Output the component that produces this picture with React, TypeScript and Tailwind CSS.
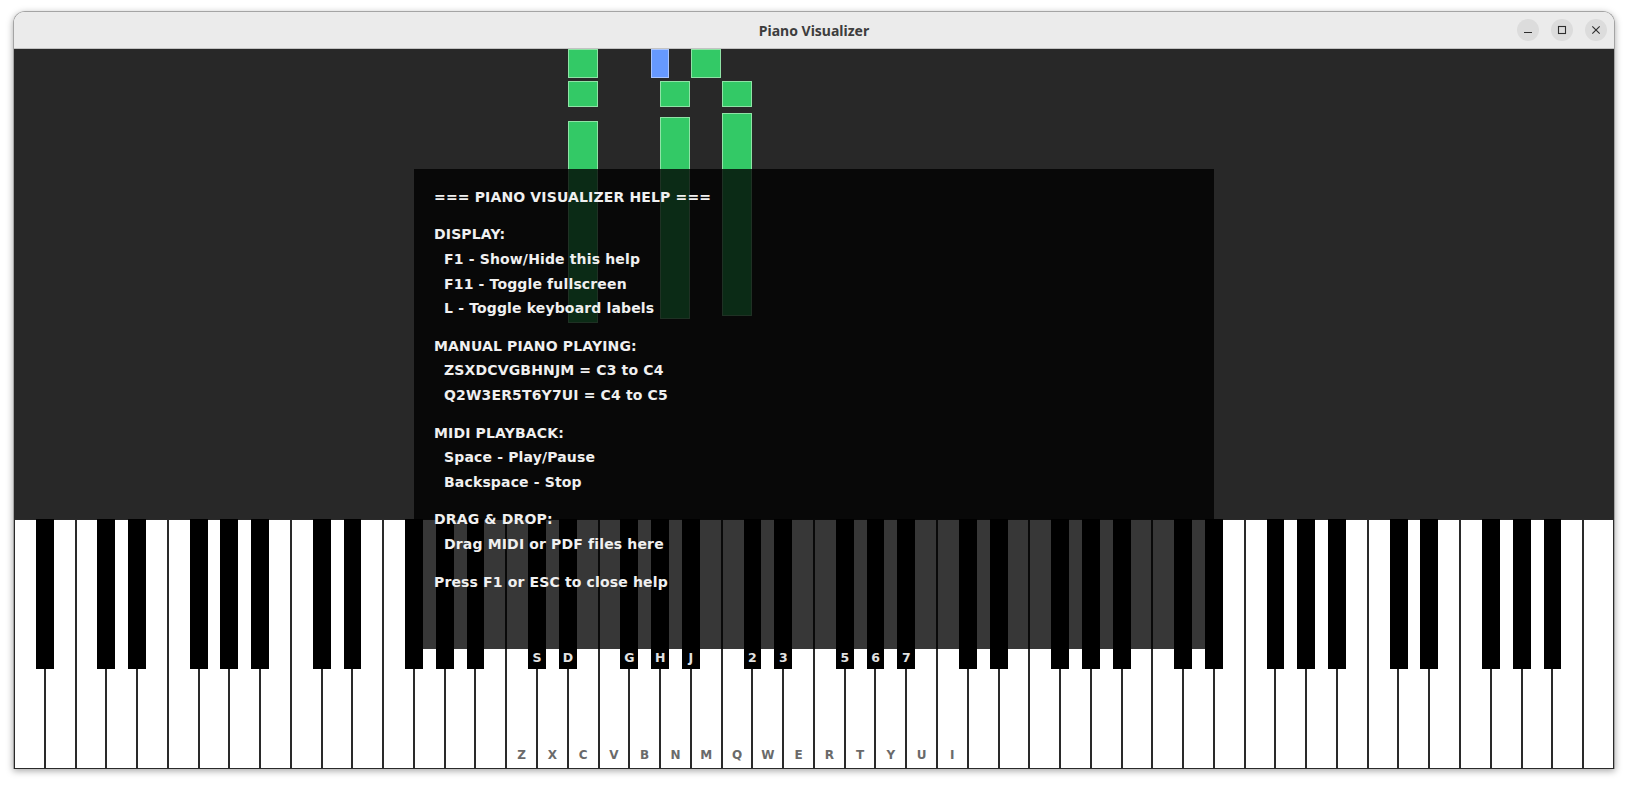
import React from "react";

const W = 1600 / 52;
const BW = 17.8;
const isBlack = (m: number) => [1, 3, 6, 8, 10].includes(m % 12);

const whiteLabels: Record<number, string> = {
  48: "Z", 50: "X", 52: "C", 53: "V", 55: "B", 57: "N", 59: "M",
  60: "Q", 62: "W", 64: "E", 65: "R", 67: "T", 69: "Y", 71: "U", 72: "I",
};
const blackLabels: Record<number, string> = {
  49: "S", 51: "D", 54: "G", 56: "H", 58: "J", 61: "2", 63: "3", 66: "5", 68: "6", 70: "7",
};

type Key = { midi: number; label?: string; left?: number };
const whites: Key[] = [];
const blacks: Key[] = [];
{
  let count = 0;
  for (let m = 21; m <= 108; m++) {
    if (isBlack(m)) {
      blacks.push({ midi: m, label: blackLabels[m], left: count * W - BW / 2 });
    } else {
      whites.push({ midi: m, label: whiteLabels[m] });
      count++;
    }
  }
}

type Note = { left: number; width: number; top: number; height: number; blue?: boolean };
const notes: Note[] = [
  { left: 18 * W, width: W - 0.8, top: 0, height: 29 },
  { left: 18 * W, width: W - 0.8, top: 32, height: 26 },
  { left: 18 * W, width: W - 0.8, top: 72, height: 202 },
  { left: 21 * W - BW / 2, width: BW, top: 0, height: 29, blue: true },
  { left: 22 * W, width: W - 0.8, top: 0, height: 29 },
  { left: 21 * W, width: W - 1.2, top: 32, height: 26 },
  { left: 21 * W, width: W - 1.2, top: 68, height: 202 },
  { left: 23 * W, width: W - 0.8, top: 32, height: 26 },
  { left: 23 * W, width: W - 0.8, top: 64, height: 203 },
];

const helpLines: (string | null)[] = [
  "=== PIANO VISUALIZER HELP ===",
  null,
  "DISPLAY:",
  "  F1 - Show/Hide this help",
  "  F11 - Toggle fullscreen",
  "  L - Toggle keyboard labels",
  null,
  "MANUAL PIANO PLAYING:",
  "  ZSXDCVGBHNJM = C3 to C4",
  "  Q2W3ER5T6Y7UI = C4 to C5",
  null,
  "MIDI PLAYBACK:",
  "  Space - Play/Pause",
  "  Backspace - Stop",
  null,
  "DRAG & DROP:",
  "  Drag MIDI or PDF files here",
  null,
  "Press F1 or ESC to close help",
];

function CtrlButton({ kind }: { kind: "min" | "max" | "close" }) {
  return (
    <div className="w-[22px] h-[22px] rounded-full bg-[#dcdcdc] flex items-center justify-center">
      <svg width="10" height="10" viewBox="0 0 10 10" fill="none" stroke="#2e2e2e" strokeWidth="1.1">
        {kind === "min" && <line x1="1" y1="7.5" x2="9" y2="7.5" />}
        {kind === "max" && <rect x="1.5" y="1.5" width="7" height="7" />}
        {kind === "close" && (
          <>
            <line x1="1.3" y1="1.3" x2="8.7" y2="8.7" />
            <line x1="8.7" y1="1.3" x2="1.3" y2="8.7" />
          </>
        )}
      </svg>
    </div>
  );
}

export default function App() {
  return (
    <div className="w-[1628px] h-[786px] bg-white overflow-hidden pt-[11px] pl-[13px]">
      <div className="w-[1602px] flex flex-col rounded-t-[12px] border-t border-x border-[#a4a4a4] shadow-[0_2px_7px_rgba(0,0,0,0.35)] overflow-hidden">
        {/* Title bar */}
        <div className="h-[37px] bg-[#ebebeb] border-b border-[#c2c2c2] grid grid-cols-[1fr_auto_1fr] items-center">
          <div />
          <div className="text-[14px] font-bold text-[#3d3d3d] font-['Noto_Sans',sans-serif] pt-[1px]">
            Piano Visualizer
          </div>
          <div className="flex justify-end gap-[12px] pr-[7px]">
            <CtrlButton kind="min" />
            <CtrlButton kind="max" />
            <CtrlButton kind="close" />
          </div>
        </div>

        {/* Content */}
        <div className="relative w-[1600px] h-[720px] bg-[#282828] flex flex-col">
          {/* Falling notes canvas */}
          <div className="relative flex-1">
            {notes.map((n, i) => (
              <div
                key={i}
                className={
                  n.blue
                    ? "absolute bg-[#6699ff] border border-[#a8c4ff]"
                    : "absolute bg-[#33c966] border border-[#8fe3a6]"
                }
                style={{ left: n.left, width: n.width, top: n.top, height: n.height }}
              />
            ))}
          </div>

          {/* Piano */}
          <div className="relative h-[250px] flex">
            {whites.map((k) => (
              <div
                key={k.midi}
                className="flex-1 h-full bg-white border border-[#2a2a2a] flex flex-col justify-end items-center pb-[7px]"
              >
                {k.label && (
                  <span className="text-[12px] leading-[12px] font-bold text-[#6a6a6a] font-['DejaVu_Sans',sans-serif]">
                    {k.label}
                  </span>
                )}
              </div>
            ))}
            {blacks.map((k) => (
              <div
                key={k.midi}
                className="absolute top-0 h-[150px] bg-black flex flex-col justify-end items-center pb-[5px]"
                style={{ left: k.left, width: BW }}
              >
                {k.label && (
                  <span className="text-[12.5px] leading-[12px] font-bold text-[#e2e2e2] font-['DejaVu_Sans',sans-serif]">
                    {k.label}
                  </span>
                )}
              </div>
            ))}
          </div>

          {/* Help overlay */}
          <div className="absolute left-[400px] top-[120px] w-[800px] h-[480px] bg-[rgba(0,0,0,0.784)] pl-[20px] pt-[15.7px] font-['DejaVu_Sans',sans-serif] font-bold text-[14px] tracking-[0.15px] text-[#f0f0f0]">
            {helpLines.map((l, i) =>
              l === null ? (
                <div key={i} className="h-[12.8px]" />
              ) : (
                <div key={i} className="leading-[24.7px] h-[24.7px] whitespace-pre">
                  {l}
                </div>
              )
            )}
          </div>
        </div>
      </div>
    </div>
  );
}
